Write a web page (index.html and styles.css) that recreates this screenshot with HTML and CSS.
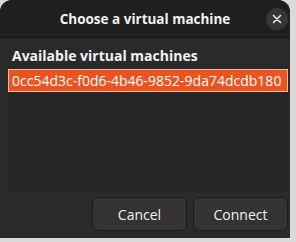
FILE: index.html
```html
<!DOCTYPE html>
<html lang="en">
<head>
  <meta charset="UTF-8">
  <title>Choose a virtual machine</title>
  <link rel="stylesheet" href="styles.css">
</head>
<body>
  <div class="window">
    <div class="titlebar">
      <span class="title">Choose a virtual machine</span>
      <button class="close" aria-label="Close">
        <svg width="10" height="10" viewBox="0 0 10 10"><path d="M1.5 1.5 L8.5 8.5 M8.5 1.5 L1.5 8.5" stroke="#e8e8e8" stroke-width="1.6" stroke-linecap="round"/></svg>
      </button>
    </div>
    <div class="content">
      <div class="label">Available virtual machines</div>
      <div class="list">
        <div class="row selected">0cc54d3c-f0d6-4b46-9852-9da74dcdb180</div>
      </div>
      <div class="actions">
        <button class="btn">Cancel</button>
        <button class="btn">Connect</button>
      </div>
    </div>
  </div>
</body>
</html>
```

FILE: styles.css
```css
body { margin: 0; background: #dadada; font-family: "Open Sans", sans-serif; color: #f2f2f2; }
.window { width: 290px; height: 238px; background: #2a2a2a; border-radius: 12px 12px 0 0; display: flex; flex-direction: column; overflow: hidden; }
.titlebar { height: 37px; background: #1f1f1f; border-bottom: 1px solid #171717; display: flex; align-items: center; justify-content: center; position: relative; }
.title { font-size: 13.5px; font-weight: 700; }
.close { position: absolute; right: 2px; top: 8px; width: 22px; height: 22px; border-radius: 50%; border: none; background: #363636; display: flex; align-items: center; justify-content: center; padding: 0; }
.content { flex: 1; display: flex; flex-direction: column; padding: 0 2px 6px 8px; }
.label { font-size: 14px; font-weight: 700; padding: 8px 0 4px 4px; }
.list { height: 122px; background: #262626; }
.row { font-size: 14px; line-height: 21px; padding: 0 2px 0 3px; color: #fff; }
.selected { background: #e95420; border: 1px solid #f6b89a; }
.actions { display: flex; justify-content: flex-end; gap: 6px; margin-top: 6px; }
.btn { width: 95px; height: 34px; border-radius: 6px; border: 1px solid #1b1b1b; background: #333333; color: #f0f0f0; font-family: "Open Sans", sans-serif; font-size: 14px; }
```
